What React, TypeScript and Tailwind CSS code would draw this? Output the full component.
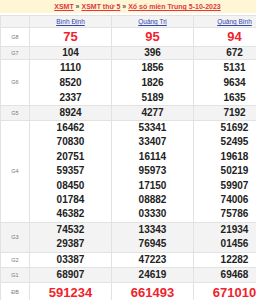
const provinces = ['Bình Định', 'Quảng Trị', 'Quảng Bình'];

type Row = { label: string; values: string[][]; big?: boolean; lead: string; stripe: boolean };

const rows: Row[] = [
  { label: 'G8', values: [['75'], ['95'], ['94']], big: true, lead: 'leading-[18px]', stripe: false },
  { label: 'G7', values: [['104'], ['396'], ['672']], lead: 'leading-[12px]', stripe: true },
  {
    label: 'G6',
    values: [
      ['1110', '8520', '2337'],
      ['1856', '1826', '5189'],
      ['5131', '9634', '1635'],
    ],
    lead: 'leading-[15px]',
    stripe: false,
  },
  { label: 'G5', values: [['8924'], ['4277'], ['7192']], lead: 'leading-[14px]', stripe: true },
  {
    label: 'G4',
    values: [
      ['16462', '70830', '20751', '59357', '08450', '01784', '46382'],
      ['53341', '33407', '16114', '95973', '17150', '08882', '03330'],
      ['51692', '52495', '19618', '50219', '59907', '74006', '75786'],
    ],
    lead: 'leading-[14.4px]',
    stripe: false,
  },
  {
    label: 'G3',
    values: [
      ['74532', '29387'],
      ['13343', '76945'],
      ['21934', '01456'],
    ],
    lead: 'leading-[14.5px]',
    stripe: true,
  },
  { label: 'G2', values: [['03387'], ['47223'], ['12282']], lead: 'leading-[14px]', stripe: false },
  { label: 'G1', values: [['68907'], ['24619'], ['69468']], lead: 'leading-[14px]', stripe: true },
  { label: 'ĐB', values: [['591234'], ['661493'], ['671010']], big: true, lead: 'leading-[19px]', stripe: false },
];

export default function App() {
  return (
    <div className="w-full overflow-hidden bg-white" style={{ fontFamily: '"Liberation Sans", Arial, sans-serif' }}>
      <div className="w-[275px]">
        {/* breadcrumb */}
        <div className="h-[13px] bg-[#fef6d4] text-center text-[7px] font-bold leading-[13px] text-[#555]">
          <a className="text-[#e2363a] underline">XSMT</a> » <a className="text-[#e2363a] underline">XSMT thứ 5</a> »{' '}
          <a className="text-[#e2363a] underline">Xổ số miền Trung 5-10-2023</a>
        </div>

        <table className="mt-[2px] w-[275px] table-fixed border-collapse">
          <colgroup>
            <col className="w-[29px]" />
            <col className="w-[82px]" />
            <col className="w-[82px]" />
            <col className="w-[82px]" />
          </colgroup>
          <thead>
            <tr className="bg-[#f3f3f3]">
              <th className="border border-[#e2e2e2] p-0" />
              {provinces.map((p) => (
                <th key={p} className="border border-[#e2e2e2] p-0 text-center text-[6.5px] font-normal leading-[11px]">
                  <a className="text-[#2f45b0] underline">{p}</a>
                </th>
              ))}
            </tr>
          </thead>
          <tbody>
            {rows.map((r) => (
              <tr key={r.label} className={r.stripe ? 'bg-[#f3f3f3]' : 'bg-white'}>
                <td className="border border-[#e2e2e2] p-0 text-center align-middle text-[5.5px] text-[#777]">{r.label}</td>
                {r.values.map((col, i) => (
                  <td
                    key={i}
                    className={`border border-[#e2e2e2] p-0 text-center font-bold ${r.lead} ${
                      r.big ? 'text-[13px] text-[#f0232d]' : 'text-[10px] text-[#222]'
                    }`}
                  >
                    {col.map((v, j) => (
                      <div key={j}>{v}</div>
                    ))}
                  </td>
                ))}
              </tr>
            ))}
          </tbody>
        </table>
      </div>
    </div>
  );
}
